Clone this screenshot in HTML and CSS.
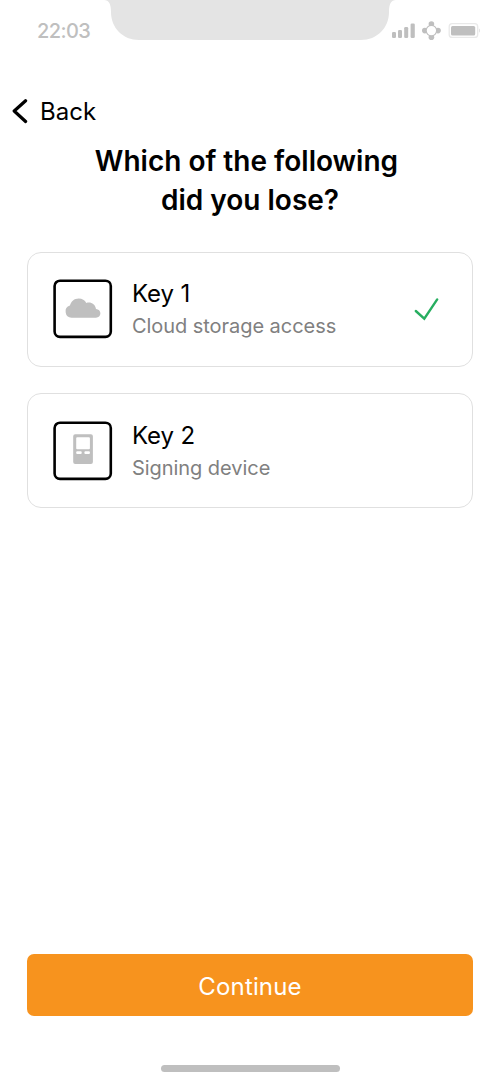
FILE: index.html
```html
<!DOCTYPE html>
<html lang="en">
<head>
<meta charset="utf-8">
<meta name="viewport" content="width=device-width, initial-scale=1">
<title>Key recovery</title>
<link rel="stylesheet" href="styles.css">
</head>
<body>
<div class="screen">
  <header class="status">
    <span class="time">22:03</span>
    <svg class="notch" viewBox="0 0 292 40"><path d="M0 0C5 0 7 4 7 12C7 28 19 40 35 40H257C273 40 285 28 285 12C285 4 287 0 292 0Z" fill="#e4e4e4"/></svg>
    <svg class="indicators" viewBox="0 0 90 20">
      <g fill="#bfbfbf"><rect x="2" y="12" width="4" height="6" rx="1.3"/><rect x="8" y="10" width="4" height="8" rx="1.3"/><rect x="14.2" y="7" width="4" height="11" rx="1.3"/><rect x="20.6" y="3.5" width="4.2" height="14.5" rx="1.3"/>
      <circle cx="41.4" cy="4" r="2.8"/><circle cx="34.8" cy="10.6" r="2.8"/><circle cx="48" cy="10.6" r="2.8"/><circle cx="41.4" cy="17.2" r="2.8"/></g>
      <circle cx="41.4" cy="10.6" r="5.2" fill="#fff" stroke="#bfbfbf" stroke-width="1.1"/>
      <rect x="59.2" y="3.7" width="28.5" height="13.7" rx="3" fill="none" stroke="#e9e9e9" stroke-width="1.3"/>
      <rect x="61" y="6" width="24.2" height="9.4" rx="1.5" fill="#bfbfbf"/>
      <path d="M89 8.5Q91.5 10.6 89 12.7Z" fill="#e4e4e4"/>
    </svg>
  </header>
  <nav class="back">
    <svg class="chevron" viewBox="0 0 16 26"><path d="M13.6 1.7L2.2 12L13.6 22.5" fill="none" stroke="#000" stroke-width="3.2" stroke-linecap="round" stroke-linejoin="round"/></svg>
    <span>Back</span>
  </nav>
  <h1 class="title">Which of the following&nbsp;<br>did you lose?</h1>
  <main class="keys">
    <section class="card">
      <svg class="tile" viewBox="0 0 60 60">
        <rect x="1.6" y="1.7" width="56.2" height="56.2" rx="5.4" fill="none" stroke="#000" stroke-width="2.6"/>
        <path transform="translate(12.2 19)" d="M6.3 19.7A6.2 6.2 0 0 1 4.7 7.6C5.8 3.2 9.1.4 13.5.4C17 .4 19.7 2.1 21.1 4.9C25.2 3.3 30 5.7 30.8 10.9C33.4 11.1 35.2 12.8 35.2 15.3C35.2 17.8 33.3 19.7 30.8 19.7Z" fill="#bfbfbf"/>
      </svg>
      <div class="label"><h2>Key 1</h2><p>Cloud storage access</p></div>
      <svg class="check" viewBox="0 0 26 24"><path d="M1.8 14L10.3 21.6L23.2 2.4" fill="none" stroke="#27ae60" stroke-width="2.4" stroke-linecap="round"/></svg>
    </section>
    <section class="card">
      <svg class="tile" viewBox="0 0 60 60">
        <rect x="1.6" y="1.7" width="56.2" height="56.2" rx="5.4" fill="none" stroke="#000" stroke-width="2.6"/>
        <path transform="translate(20.2 13.3)" fill="#bfbfbf" fill-rule="evenodd" d="M2 0H17.7Q19.7 0 19.7 2V27.8Q19.7 29.8 17.7 29.8H2Q0 29.8 0 27.8V2Q0 0 2 0ZM4 2.9Q3 2.9 3 3.9V13.9Q3 14.9 4 14.9H15.7Q16.7 14.9 16.7 13.9V3.9Q16.7 2.9 15.7 2.9ZM4 16.9Q3 16.9 3 17.9V18.8Q3 19.8 4 19.8H7.5Q8.5 19.8 8.5 18.8V17.9Q8.5 16.9 7.5 16.9ZM12.2 16.9Q11.2 16.9 11.2 17.9V18.8Q11.2 19.8 12.2 19.8H15.7Q16.7 19.8 16.7 18.8V17.9Q16.7 16.9 15.7 16.9Z"/>
      </svg>
      <div class="label"><h2>Key 2</h2><p>Signing device</p></div>
    </section>
  </main>
  <footer class="footer">
    <button class="continue" type="button">Continue</button>
    <div class="home"></div>
  </footer>
</div>
</body>
</html>
```

FILE: styles.css
```css
* { box-sizing: border-box; margin: 0; }
body { background: #fff; color: #000; font-family: Inter, "Liberation Sans", sans-serif; }
.screen { width: 500px; height: 1083px; display: flex; flex-direction: column; overflow: hidden; }
svg { display: block; flex: none; }
.status { display: flex; height: 95px; align-items: flex-start; }
.time { width: 104px; padding: 18px 0 0 37px; color: #bfbfbf; font-size: 20px; line-height: 26px; font-weight: 500; letter-spacing: -0.6px; white-space: nowrap; }
.notch { width: 292px; height: 40px; }
.indicators { width: 90px; height: 20px; margin: 20px 0 0 -6px; }
.back { display: flex; height: 33px; align-items: center; padding-left: 12px; gap: 12px; font-size: 24px; line-height: 33px; }
.chevron { width: 16px; height: 26px; }
.title { margin-top: 14px; text-align: center; font-size: 28px; line-height: 39px; font-weight: 600; }
.keys { margin-top: 32px; padding: 0 26.67px; display: flex; flex-direction: column; gap: 26.67px; }
.card { height: 114.67px; padding: 0 32px 0 25.3px; display: flex; align-items: center; border: 1.33px solid #e0e0e0; border-radius: 14px; }
.tile { width: 60px; height: 60px; }
.label { margin-left: 19px; padding-top: 2px; flex: 1; }
.label h2 { font-size: 24px; line-height: 32px; font-weight: 400; letter-spacing: -0.1px; }
.label p { color: #808080; font-size: 20px; line-height: 32px; font-weight: 400; letter-spacing: -0.05px; }
.check { width: 26px; height: 24px; }
.footer { margin-top: auto; padding: 0 26.67px 11px; display: flex; flex-direction: column; align-items: center; }
.continue { width: 100%; height: 62px; padding: 3px 0 0; border: 0; border-radius: 7px; background: #f7931e; color: #fff; font: 400 24px/32px Inter, "Liberation Sans", sans-serif; letter-spacing: 0.15px; }
.home { width: 179px; height: 7px; margin-top: 49px; border-radius: 4px; background: #bfbfbf; }
```
